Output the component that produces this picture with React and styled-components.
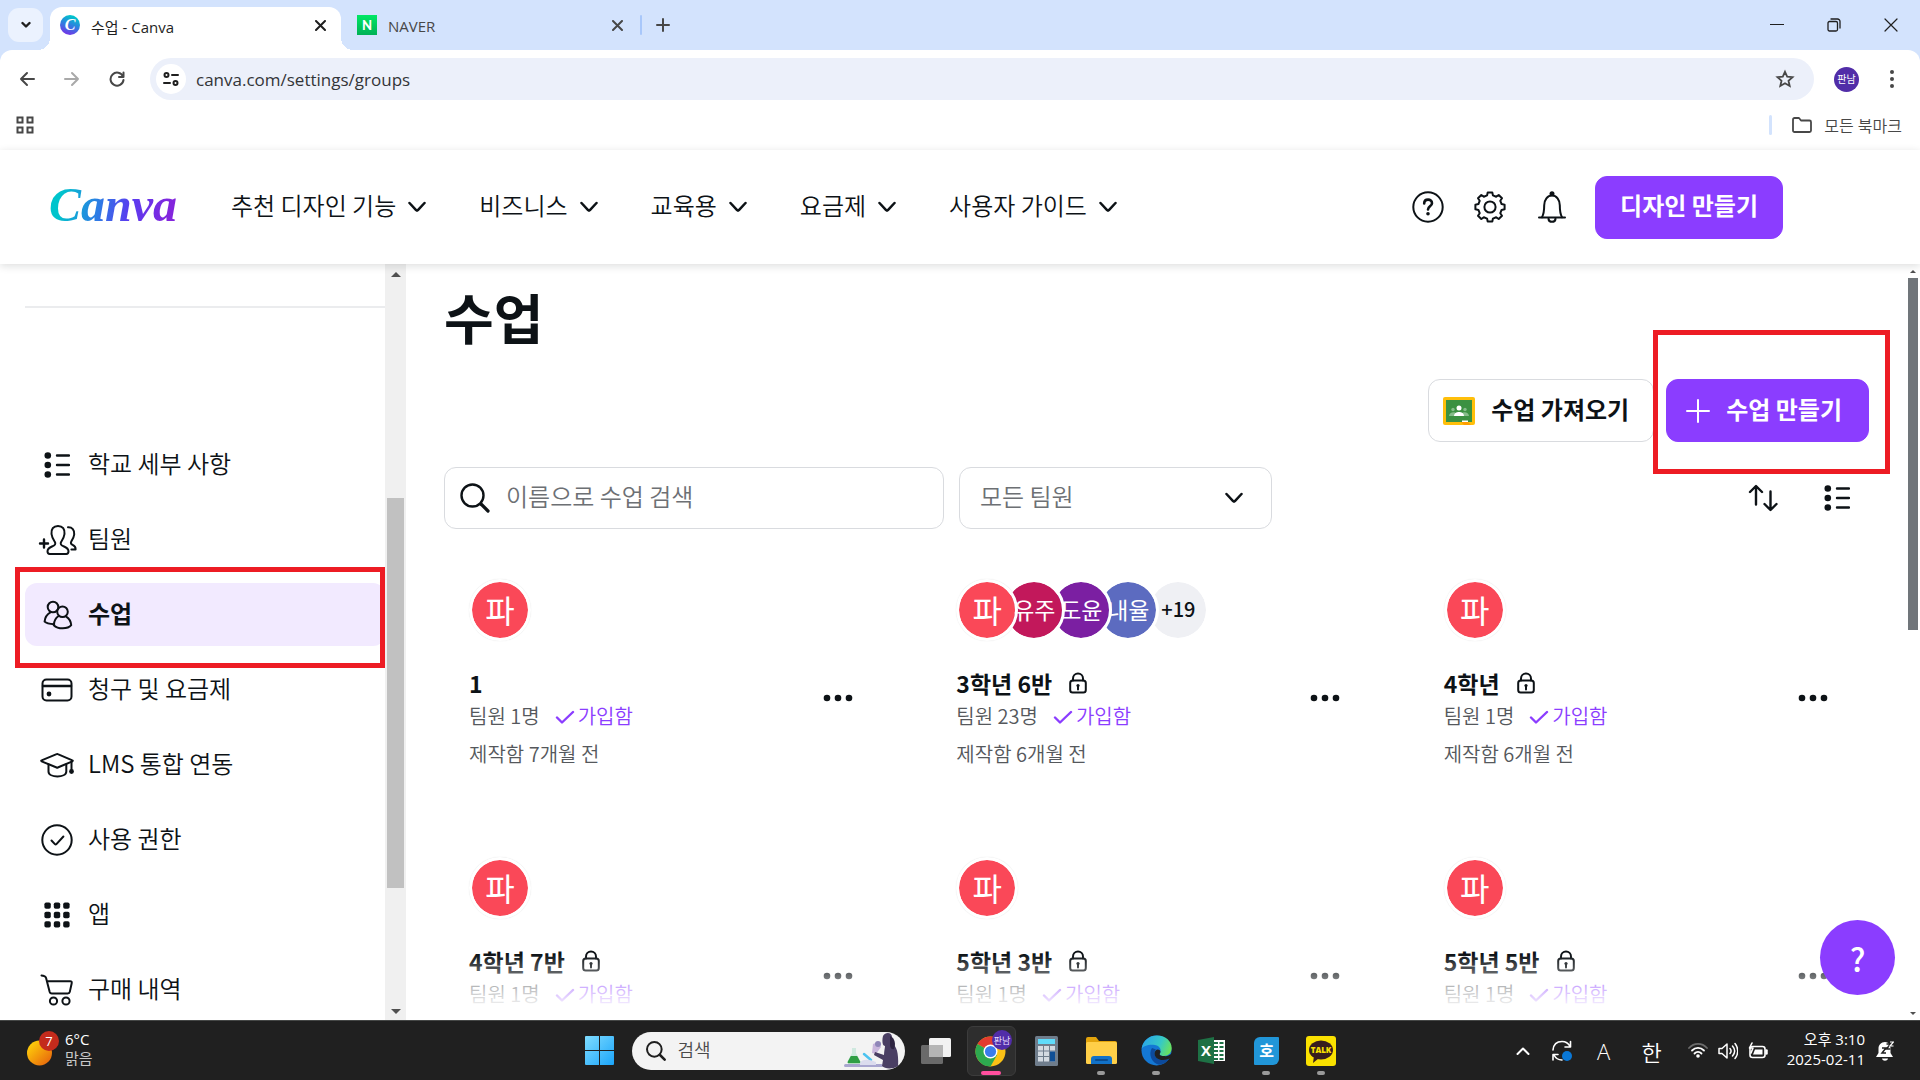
import React from "react";
import styled, { createGlobalStyle } from "styled-components";

const UI_FONT = `"Open Sans", "Noto Sans CJK KR", sans-serif`;
const PAGE_FONT = `"Noto Sans CJK KR", sans-serif`;
const INK = "#0d1216";
const PURPLE = "#8b3dff";
const RED = "#ed1c24";
// the Korean face sits low in its line box, controls lift it by this much
const LIFT = 5;

const GlobalStyle = createGlobalStyle`
    *, *::before, *::after {
        box-sizing: border-box;
    }
    body {
        margin: 0;
        background: #ffffff;
    }
    button, input, select {
        font: inherit;
        color: inherit;
        margin: 0;
        padding: 0;
        border: none;
        background: none;
        outline: none;
    }
    a {
        color: inherit;
        text-decoration: none;
    }
    ul {
        list-style: none;
        margin: 0;
        padding: 0;
    }
    svg {
        display: block;
        flex-shrink: 0;
    }
`;

const Screen = styled.div`
    height: 100vh;
    display: flex;
    flex-direction: column;
    overflow: hidden;
    background: #ffffff;
    color: ${INK};
    font-family: ${PAGE_FONT};
`;
const Label = styled.span`
    padding-bottom: ${LIFT}px;
`;

/* ---------- browser window ---------- */

const BrowserChrome = styled.header`
    flex-shrink: 0;
    background: #d3e3fd;
    font-family: ${UI_FONT};
    color: #474747;
`;
const TabStrip = styled.div`
    height: 50px;
    padding-left: 8px;
    display: flex;
    align-items: center;
`;
const TabSearchButton = styled.button`
    width: 35px;
    height: 34px;
    margin-right: 7px;
    border-radius: 11px;
    background: #ebf2fe;
    display: flex;
    align-items: center;
    justify-content: center;
    color: #1f1f1f;
`;
const Tab = styled.div`
    position: relative;
    align-self: flex-end;
    width: 291px;
    height: 43px;
    padding: 0 15px 7px 10px;
    display: flex;
    align-items: center;
    gap: 11px;
    border-radius: 12px 12px 0 0;
    background: ${(props) => (props.$active ? "#ffffff" : "transparent")};
    color: ${(props) => (props.$active ? "#1f1f1f" : "#474747")};
    font-size: 15px;

    & + & {
        margin-left: 6px;
    }

    &::before,
    &::after {
        content: "";
        display: ${(props) => (props.$active ? "block" : "none")};
        position: absolute;
        bottom: 0;
        width: 12px;
        height: 12px;
    }
    &::before {
        left: -12px;
        background: radial-gradient(circle at 0 0, transparent 12px, #ffffff 12px);
    }
    &::after {
        right: -12px;
        background: radial-gradient(circle at 100% 0, transparent 12px, #ffffff 12px);
    }
`;
const TabTitle = styled.span`
    flex-grow: 1;
    padding-top: 2px;
    white-space: nowrap;
`;
const PlainButton = styled.button`
    display: flex;
    align-items: center;
    justify-content: center;
    cursor: pointer;
`;
const CanvaFavicon = styled.span`
    width: 20px;
    height: 20px;
    border-radius: 50%;
    background: linear-gradient(200deg, #00c4cc 15%, #2f7fe0 50%, #7d2ae8 95%);
    color: #ffffff;
    font: italic bold 16px/20px "Liberation Serif", serif;
    text-align: center;
`;
const NaverFavicon = styled.span`
    width: 20px;
    height: 20px;
    background: linear-gradient(#00e865, #00b156);
    color: #ffffff;
    font: 900 13px/20px Lato, sans-serif;
    text-align: center;
`;
const TabDivider = styled.span`
    width: 2px;
    height: 20px;
    margin: 0 14px 0 2px;
    border-radius: 1px;
    background: #a8c7fa;
`;
const WindowControls = styled.div`
    margin-left: auto;
    padding-right: 22px;
    display: flex;
    align-items: center;
    gap: 43px;
    color: #1f1f1f;
`;
const Toolbar = styled.div`
    height: 58px;
    padding: 0 25px 0 19px;
    border-radius: 12px 12px 0 0;
    background: #ffffff;
    display: flex;
    align-items: center;
`;
const HistoryButtons = styled.div`
    display: flex;
    align-items: center;
    gap: 29px;
    margin-right: 25px;
`;
const AddressBar = styled.div`
    flex-grow: 1;
    height: 42px;
    padding: 0 19px 0 6px;
    border-radius: 21px;
    background: #ecf0fa;
    display: flex;
    align-items: center;
`;
const SiteInfoButton = styled(PlainButton)`
    width: 30px;
    height: 30px;
    border-radius: 50%;
    background: #ffffff;
    color: #1f1f1f;
`;
const AddressInput = styled.input`
    flex-grow: 1;
    margin: 0 10px;
    font-size: 17px;
    color: #333538;
`;
const ProfileButton = styled.button`
    width: 25px;
    height: 25px;
    margin: 0 30px 0 20px;
    border-radius: 50%;
    background: #512da8;
    color: #ffffff;
    font-size: 10px;
    line-height: 25px;
    text-align: center;
`;
const BookmarksBar = styled.div`
    height: 42px;
    padding: 0 18px 8px 16px;
    background: #ffffff;
    display: flex;
    align-items: center;
    justify-content: space-between;
`;
const AllBookmarks = styled.button`
    display: flex;
    align-items: center;
    gap: 12px;
    font-size: 16px;
    font-weight: 350;
`;
const BookmarkDivider = styled.span`
    width: 3px;
    height: 20px;
    margin-right: 8px;
    border-radius: 2px;
    background: #d3e3fd;
`;

/* ---------- Canva header ---------- */

const SiteHeader = styled.div`
    position: relative;
    z-index: 2;
    flex-shrink: 0;
    height: 114px;
    padding: 0 137px 0 47px;
    display: flex;
    align-items: center;
    background: #ffffff;
    box-shadow: 0 2px 8px rgba(13, 18, 22, 0.14);
`;
const Logo = styled.a`
    margin-right: 52px;
    padding: 0 2px ${LIFT}px;
    font: italic bold 48px/60px "Liberation Serif", serif;
    color: transparent;
    background: linear-gradient(100deg, #00c4cc 12%, #2d7be5 40%, #5a3cf0 62%, #8325dd 90%);
    background-clip: text;
    -webkit-background-clip: text;
`;
const MainNav = styled.nav`
    display: flex;
    gap: 53px;
`;
const NavButton = styled.button`
    display: flex;
    align-items: center;
    gap: 12px;
    font-size: 24px;
    font-weight: 350;
    line-height: 32px;
    white-space: nowrap;
    cursor: pointer;
`;
const HeaderActions = styled.div`
    margin-left: auto;
    display: flex;
    align-items: center;
    gap: 27px;
`;
const HeaderIcons = styled.div`
    display: flex;
    gap: 30px;
`;
const Button = styled.button`
    height: 63px;
    padding: 0 24px;
    border-radius: 12px;
    border: 1px solid ${(props) => (props.$primary ? PURPLE : "#d9dbdf")};
    background: ${(props) => (props.$primary ? PURPLE : "#ffffff")};
    color: ${(props) => (props.$primary ? "#ffffff" : INK)};
    display: flex;
    align-items: center;
    gap: 16px;
    font-size: 24px;
    font-weight: ${(props) => (props.$primary ? 700 : 600)};
    white-space: nowrap;
    cursor: pointer;
`;
const ActionButton = styled(Button)`
    padding: ${(props) => (props.$primary ? "0 26px 0 19px" : "0 24px 0 14px")};
`;

/* ---------- body: sidebar + classes ---------- */

const Body = styled.div`
    position: relative;
    flex-grow: 1;
    min-height: 0;
    display: flex;
`;
const Sidebar = styled.aside`
    width: 385px;
    flex-shrink: 0;
    padding-left: 25px;
    overflow: hidden;
`;
const SidebarRule = styled.hr`
    margin: 42px 0 125px;
    border: none;
    height: 2px;
    background: #ebecee;
`;
const SidebarList = styled.ul`
    display: flex;
    flex-direction: column;
    gap: 12px;
`;
const SidebarItem = styled.li`
    position: relative;
`;
const SidebarLink = styled.a`
    height: 63px;
    padding-left: 12px;
    display: flex;
    align-items: center;
    gap: 11px;
    border-radius: 12px;
    background: ${(props) => (props.$active ? "#f2eaff" : "transparent")};
    font-size: 24px;
    font-weight: ${(props) => (props.$active ? 700 : 350)};
`;
const SidebarIcon = styled.span`
    width: 40px;
    display: flex;
    justify-content: center;
`;
/* red annotation frames drawn over the page */
const SidebarFrame = styled.span`
    position: absolute;
    inset: -16px 0 -22px -10px;
    border: 5px solid ${RED};
    pointer-events: none;
`;
const ButtonFrame = styled.span`
    position: absolute;
    inset: -49px -21px -32px -13px;
    border: 5px solid ${RED};
    pointer-events: none;
`;
const SidebarScrollbar = styled.div`
    width: 21px;
    flex-shrink: 0;
    padding: 0 2px;
    display: grid;
    grid-template-rows: 21px 213fr 390fr 115fr 17px;
    justify-items: center;
    align-items: center;
    background: #f0f0f0;
`;
const SidebarThumb = styled.span`
    grid-row: 3;
    width: 100%;
    height: 100%;
    background: #c1c1c1;
`;
const PageScrollbar = styled.div`
    width: 12px;
    flex-shrink: 0;
    padding-right: 2px;
    display: grid;
    grid-template-rows: 14px 352fr 376fr 14px;
    justify-items: center;
    align-items: center;
`;
const PageThumb = styled.span`
    width: 100%;
    height: 100%;
    background: #70757a;
`;
const ScrollArrow = styled.span`
    grid-row: ${(props) => (props.$down ? -2 : 1)};
    width: 0;
    height: 0;
    border: ${(props) => props.$size}px solid transparent;
    border-top: ${(props) => (props.$down ? `${props.$size}px solid #505050` : "none")};
    border-bottom: ${(props) => (props.$down ? "none" : `${props.$size}px solid #505050`)};
`;
const Main = styled.main`
    position: relative;
    flex-grow: 1;
    min-width: 0;
    padding: 21px 39px 0 38px;
    overflow: hidden;
`;
const PageTitle = styled.h1`
    margin: 0 0 30px;
    font-size: 54px;
    line-height: 64px;
    font-weight: 700;
`;
const ActionRow = styled.div`
    display: flex;
    justify-content: flex-end;
    gap: 12px;
`;
const Framed = styled.div`
    position: relative;
`;
const FilterRow = styled.div`
    margin-top: 25px;
    display: flex;
    align-items: center;
    gap: 15px;
`;
const SearchField = styled.label`
    width: 500px;
    height: 62px;
    padding: 0 15px;
    display: flex;
    align-items: center;
    gap: 16px;
    border: 1px solid #d9dbdf;
    border-radius: 12px;
`;
const SearchInput = styled.input`
    flex-grow: 1;
    min-width: 0;
    padding-bottom: ${LIFT}px;
    font-size: 24px;
    font-weight: 350;

    &::placeholder {
        color: #6d7074;
        opacity: 1;
    }
`;
const SelectField = styled.label`
    position: relative;
    width: 313px;
    height: 62px;
    border: 1px solid #d9dbdf;
    border-radius: 12px;

    svg {
        position: absolute;
        right: 28px;
        top: 24px;
        pointer-events: none;
    }
`;
const Select = styled.select`
    width: 100%;
    height: 100%;
    padding: 0 20px ${LIFT}px;
    appearance: none;
    color: #6d7074;
    font-size: 24px;
    font-weight: 350;
`;
const ViewButtons = styled.div`
    margin-left: auto;
    padding-right: 19px;
    display: flex;
    gap: 46px;
`;
const ClassGrid = styled.ul`
    margin-top: 50px;
    display: grid;
    grid-template-columns: repeat(3, 1fr);
    gap: 87px 37px;
`;
const ClassCard = styled.li`
    padding: 0 25px;
`;
const AvatarStack = styled.div`
    display: flex;
    height: 62px;
`;
const Avatar = styled.span`
    position: relative;
    z-index: ${(props) => props.$level};
    width: 62px;
    height: 62px;
    margin-left: ${(props) => (props.$first ? 0 : -15)}px;
    padding-bottom: 2px;
    border: 3px solid #ffffff;
    border-radius: 50%;
    background: ${(props) => props.$color};
    background-clip: padding-box;
    box-shadow: ${(props) => (props.$first ? "0 0 1px rgba(13, 18, 22, 0.15)" : "none")};
    display: flex;
    align-items: center;
    justify-content: center;
    color: #ffffff;
    font-size: ${(props) => (props.$first ? 32 : 23)}px;
    line-height: 32px;
    white-space: nowrap;
`;
const MoreMembers = styled(Avatar)`
    margin-left: -12px;
    color: ${INK};
    font-size: 20px;
    font-weight: 500;
`;
const CardInfo = styled.div`
    margin-top: 26px;
    display: flex;
    justify-content: space-between;
    align-items: flex-start;
`;
const CardTitle = styled.h2`
    margin: 0;
    display: flex;
    align-items: center;
    gap: 17px;
    font-size: 23px;
    line-height: 32px;
    font-weight: 700;
`;
const CardMeta = styled.p`
    margin: 1px 0 0;
    display: flex;
    align-items: center;
    color: #55585c;
    font-size: 20px;
    line-height: 32px;
    font-weight: 350;
`;
const Joined = styled.span`
    margin-left: 15px;
    display: flex;
    align-items: center;
    gap: 3px;
    color: ${PURPLE};
`;
const CreatedLine = styled(CardMeta)`
    margin-top: 6px;
`;
const MoreButton = styled(PlainButton)`
    width: 63px;
    height: 62px;
`;
const BottomFade = styled.div`
    position: absolute;
    left: 0;
    right: 0;
    bottom: 0;
    height: 66px;
    z-index: 6;
    background: linear-gradient(rgba(255, 255, 255, 0), #ffffff 85%);
    pointer-events: none;
`;
const HelpBubble = styled.button`
    position: absolute;
    right: 25px;
    bottom: 25px;
    z-index: 7;
    width: 75px;
    height: 75px;
    border-radius: 50%;
    background: ${PURPLE};
    color: #ffffff;
    font-size: 32px;
    font-weight: 500;
`;

/* ---------- Windows taskbar ---------- */

const Taskbar = styled.footer`
    flex-shrink: 0;
    height: 60px;
    display: grid;
    grid-template-columns: 1fr auto 1fr;
    align-items: center;
    background: #202020;
    border-top: 1px solid #454746;
    color: #ffffff;
    font-family: ${UI_FONT};
    font-size: 15px;
`;
const Weather = styled.button`
    justify-self: start;
    margin-left: 27px;
    padding-bottom: 3px;
    display: flex;
    align-items: center;
    gap: 6px;
    text-align: left;
    line-height: 19px;
`;
const WeatherNote = styled.span`
    display: block;
    color: #c8c8c8;
`;
const AppRow = styled.div`
    display: flex;
    align-items: center;
    gap: 6px;
`;
const AppButton = styled.button`
    position: relative;
    width: 49px;
    height: 50px;
    border-radius: 6px;
    border: 1px solid ${(props) => (props.$active ? "#3c3c3c" : "transparent")};
    background: ${(props) => (props.$active ? "#2e2e2e" : "transparent")};
    display: flex;
    align-items: center;
    justify-content: center;

    &::after {
        content: "";
        display: ${(props) => (props.$running ? "block" : "none")};
        position: absolute;
        bottom: 0;
        width: ${(props) => (props.$active ? 20 : 8)}px;
        height: 4px;
        border-radius: 2px;
        background: ${(props) => (props.$active ? "#ff4f9f" : "#9a9a9a")};
    }
`;
const TaskSearch = styled.label`
    width: 273px;
    height: 38px;
    margin: 0 1px 0 2px;
    padding: 0 6px 0 14px;
    border-radius: 19px;
    background: #f3f3f3;
    display: flex;
    align-items: center;
    gap: 12px;
    overflow: hidden;
    color: #1f1f1f;
`;
const TaskSearchInput = styled.input`
    flex-grow: 1;
    min-width: 0;
    padding-bottom: 2px;
    font-size: 18px;
    font-weight: 350;

    &::placeholder {
        color: #4a4a4a;
        opacity: 1;
    }
`;
const Tray = styled.div`
    justify-self: end;
    padding-right: 26px;
    display: flex;
    align-items: center;
`;
const TrayIcons = styled.div`
    margin-left: 26px;
    display: flex;
    gap: 10px;
`;
const TrayButton = styled(PlainButton)`
    width: 20px;
    margin-left: ${(props) => props.$gap || 22}px;
    font-size: 22px;
    font-weight: 350;
`;
const Clock = styled.button`
    margin: 0 11px 0 19px;
    padding-bottom: 3px;
    text-align: right;
    line-height: 20px;
`;

/* ---------- icons ---------- */

const Line = ({ w = 24, h = w, box, stroke = 2, children, ...rest }) => (
    <svg
        width={w}
        height={h}
        viewBox={box || `0 0 ${w} ${h}`}
        fill="none"
        stroke="currentColor"
        strokeWidth={stroke}
        strokeLinecap="round"
        strokeLinejoin="round"
        aria-hidden="true"
        {...rest}
    >
        {children}
    </svg>
);

const Chevron = () => (
    <Line w={18} h={12} stroke={2.5}>
        <path d="M1.500 2l6.600 7.200c.6.600 1.200.6 1.800 0L16.500 2" />
    </Line>
);
const Cross = ({ size = 11, stroke = 2 }) => (
    <Line w={size} stroke={stroke}>
        <path d={`M1 1L${size - 1} ${size - 1}M${size - 1} 1L1 ${size - 1}`} />
    </Line>
);
const ListIcon = () => (
    <Line w={26} stroke={2.4}>
        <path d="M13 3.500h12M13 13h12M13 22.500h12" />
        <g fill="currentColor" stroke="none">
            <circle cx="3.800" cy="3.500" r="3.300" />
            <circle cx="3.800" cy="13" r="3.300" />
            <circle cx="3.800" cy="22.500" r="3.300" />
        </g>
    </Line>
);
const TeamIcon = () => (
    <Line w={40} h={32}>
        <path d="M3 19.500h8M7 15.500v8" strokeWidth="2.400" />
        <path d="M21 2c-4.700 0-7 3.200-6.500 8 .4 3.600 1.700 5.400 3.300 7.800 1.200 2 .2 3.400-2 4.300-3 1.200-5.300 2-5.300 5.200 0 2 .7 2.700 2.200 2.700h16.600c1.500 0 2.200-.7 2.200-2.700 0-3.200-2.300-4-5.300-5.200-2.200-.9-3.200-2.300-2-4.300 1.600-2.400 2.900-4.200 3.300-7.800.5-4.800-1.800-8-6.500-8z" />
        <path d="M31 3.300c4.200-.2 6.600 2.700 6.200 7.200-.3 3-1.700 5-2.900 6.900-.9 1.500-.4 2.700 1.300 3.500 2 .9 3.200 2 3 4.600h-4.200" />
    </Line>
);
const ClassesIcon = () => (
    <Line w={32}>
        <circle cx="12" cy="8" r="5.300" />
        <circle cx="21.500" cy="12.800" r="5.300" />
        <path d="M13.200 25.200c-4.200-.3-8-1-9.600-2.600.3-4 2.600-7.300 5.800-9.200" />
        <path d="M17.600 17c-2.700 1.700-4.600 5-4.800 9.200 4 4.200 14 4.200 17.400 0-.3-3.900-2.400-7-5-8.600" />
    </Line>
);
const CardIcon = () => (
    <Line w={32} h={24}>
        <rect x="1.500" y="1.500" width="29" height="21" rx="4" />
        <path d="M2 8h28" strokeWidth="2.500" />
        <circle cx="8" cy="16" r="2.400" fill="currentColor" stroke="none" />
    </Line>
);
const CapIcon = () => (
    <Line w={34} h={26}>
        <path d="M16.600 2.200L1.600 8.400c-.6.200-.6.700 0 .9l15 6.200c.4.200.8.200 1.200 0l14.600-6.200c.6-.2.6-.7 0-.9L17.800 2.200c-.4-.2-.8-.2-1.200 0z" />
        <path d="M8.500 12.500v7c0 6.600 17.800 6.600 17.800 0v-7M31.500 10v8" />
        <circle cx="31.500" cy="19.500" r="2.400" fill="currentColor" stroke="none" />
    </Line>
);
const CheckCircleIcon = () => (
    <Line w={32}>
        <circle cx="16" cy="16" r="14.700" />
        <path d="M10.500 16.500l3.400 3.600c.5.500 1 .5 1.500 0l7-7.600" />
    </Line>
);
const AppsIcon = () => (
    <svg width="26" height="26" viewBox="0 0 26 26" fill="currentColor" aria-hidden="true">
        {[0, 1, 2].map((row) =>
            [0, 1, 2].map((col) => (
                <rect key={`${row}${col}`} x={col * 9.4 + 0.4} y={row * 9.4 + 0.4} width="6.400" height="6.400" rx="1.800" />
            ))
        )}
    </svg>
);
const CartIcon = () => (
    <Line w={34} h={32}>
        <path d="M1.500 1.500l2.700.6c1 .3 1.500.8 1.800 1.700L9.700 18c.3 1 .9 1.500 2 1.500h16c1.200 0 1.900-.5 2.100-1.600l1.900-8.700c.3-1.400-.3-2-1.600-2H7" />
        <circle cx="13.500" cy="27" r="3.600" />
        <circle cx="26" cy="27" r="3.600" />
    </Line>
);
const HelpIcon = () => (
    <Line w={32}>
        <circle cx="16" cy="16" r="14.700" />
        <path d="M12.200 12.500c0-5.200 7.800-5 7.800-.3 0 3-4 3.200-4 6.200" strokeWidth="2.600" />
        <circle cx="16" cy="22.700" r="1.800" fill="currentColor" stroke="none" />
    </Line>
);

// eight rounded teeth around the hub
const gearPoints = Array.from({ length: 8 }, (_, tooth) =>
    [
        [-14, 12],
        [-9, 14.8],
        [9, 14.8],
        [14, 12],
    ].map(([shift, radius]) => {
        const angle = ((tooth * 45 + shift) * Math.PI) / 180;
        return `${(16 + radius * Math.sin(angle)).toFixed(1)},${(16 - radius * Math.cos(angle)).toFixed(1)}`;
    })
)
    .flat()
    .join(" ");
const GearIcon = () => (
    <Line w={32}>
        <polygon points={gearPoints} />
        <circle cx="16" cy="16" r="5.600" />
    </Line>
);
const BellIcon = () => (
    <Line w={32}>
        <path d="M6 26.300c2-3.600 2.200-7 2.200-12 0-5.600 3.300-9.800 7.800-9.800s7.800 4.200 7.800 9.800c0 5 .2 8.400 2.200 12" />
        <path d="M3 26.500h26M12.500 28c.5 3.800 6.500 3.800 7 0" />
        <circle cx="16" cy="2.800" r="2.500" fill="currentColor" stroke="none" />
    </Line>
);
const SearchIcon = ({ size = 30, stroke = 2.4 }) => (
    <Line w={size} box="0 0 30 30" stroke={stroke}>
        <circle cx="12.500" cy="12.500" r="11" />
        <path d="M21 21l7 7" strokeWidth={stroke + 0.8} />
    </Line>
);
const SortIcon = () => (
    <Line w={30} h={28} stroke={2.4}>
        <path d="M8 20.500V2.500M2 8l6-6 6 6M22.500 7.500v18M16.500 20l6 6 6-6" />
    </Line>
);
const LockIcon = () => (
    <Line w={18} h={22}>
        <rect x="1.200" y="8.500" width="15.600" height="12" rx="2.500" />
        <path d="M4 8.500V6.500a5 5 0 0 1 10 0v2M9 14.500v3" />
        <circle cx="9" cy="13.500" r="1.600" fill="currentColor" stroke="none" />
    </Line>
);
const CheckIcon = () => (
    <Line w={20} h={16} stroke={2.4}>
        <path d="M2 9.500l5 5L18 4" />
    </Line>
);
const DotsIcon = () => (
    <svg width="30" height="8" viewBox="0 0 30 8" fill="currentColor" aria-hidden="true">
        <circle cx="4" cy="4" r="3.300" />
        <circle cx="15" cy="4" r="3.300" />
        <circle cx="26" cy="4" r="3.300" />
    </svg>
);
const PlusIcon = () => (
    <Line w={24}>
        <path d="M12 1v22M1 12h22" />
    </Line>
);
const ClassroomIcon = () => (
    <svg width="32" height="28" viewBox="0 0 32 28" aria-hidden="true">
        <rect width="32" height="28" rx="2" fill="#ffbf0a" />
        <rect x="3" y="3" width="26" height="22" fill="#3b9141" />
        <path d="M18 25h7l3 3h-7z" fill="#ff9e00" />
        <rect x="19" y="23.500" width="6" height="1.500" fill="#ffffff" />
        <g fill="#86bd8a">
            <circle cx="10" cy="12.500" r="1.700" />
            <circle cx="22" cy="12.500" r="1.700" />
            <path d="M6 19c0-4 6-5 8-2v2zM18 19v-2c2-3 8-2 8 2z" />
        </g>
        <circle cx="16" cy="11" r="2.500" fill="#ffffff" />
        <path d="M11 19c0-5.500 10-5.500 10 0z" fill="#ffffff" />
    </svg>
);

const WeatherIcon = () => (
    <svg width="32" height="36" viewBox="0 0 32 36" aria-hidden="true">
        <defs>
            <linearGradient id="sun" x1="0" y1="0" x2="1" y2="1">
                <stop offset="0.1" stopColor="#ffd10a" />
                <stop offset="0.9" stopColor="#e8680c" />
            </linearGradient>
        </defs>
        <circle cx="12.500" cy="22" r="12.500" fill="url(#sun)" />
        <circle cx="22" cy="10" r="10" fill="#c42b1c" />
        <text x="22" y="15" fontSize="13" textAnchor="middle" fill="#ffffff">
            7
        </text>
    </svg>
);
const StartIcon = () => (
    <svg width="29" height="29" viewBox="0 0 29 29" aria-hidden="true">
        <defs>
            <linearGradient id="win" x1="0" y1="0" x2="1" y2="1">
                <stop offset="0" stopColor="#7fdcff" />
                <stop offset="1" stopColor="#1ba5fa" />
            </linearGradient>
        </defs>
        <path d="M0 1a1 1 0 0 1 1-1h13v14H0zM15 0h13a1 1 0 0 1 1 1v13H15zM0 15h14v14H1a1 1 0 0 1-1-1zM15 15h14v13a1 1 0 0 1-1 1H15z" fill="url(#win)" />
    </svg>
);
const LabPicture = () => (
    <svg width="55" height="36" viewBox="0 0 55 36" aria-hidden="true">
        <rect x="0" y="31" width="39" height="3" rx="1.500" fill="#a9a6cf" />
        <path d="M8 15h4v5l4.500 8.500c.6 1.200 0 2-1.200 2H4.700c-1.200 0-1.800-.8-1.200-2L8 20z" fill="#cfe9df" />
        <path d="M6.800 23h6.400l3 5.500c.5 1 0 1.800-1 1.800H4.800c-1 0-1.500-.8-1-1.800z" fill="#2f9e44" />
        <path d="M20 21l7 6" stroke="#4cc3f0" strokeWidth="2.500" strokeLinecap="round" />
        <path d="M16 30c2-4 8-4 16-1v3H16z" fill="#dcdcee" />
        <path d="M29 11l5-2 3 5-5 7-4-1z" fill="#c9b6dc" />
        <circle cx="34" cy="11" r="3" fill="#8f86b8" />
        <path d="M39 3c2-4 9-4 9 1 1 2 0 4-1 6 5 2 8 8 7 24-7 2-13 2-16-1l1-6-9-5 1-3 9 3c0-4 1-7 1-9-3 0-3-6-2-10z" fill="#4a3f63" />
        <path d="M46 3c5 2 6 8 4 13-3 1-4-2-4-5z" fill="#2d2440" />
    </svg>
);
const TaskViewIcon = () => (
    <svg width="30" height="28" viewBox="0 0 30 28" aria-hidden="true">
        <rect x="0" y="8" width="22" height="19" rx="1.500" fill="#6a6a6a" />
        <rect x="8" y="1" width="22" height="19" rx="1.500" fill="#f2f2f2" />
        <rect x="8" y="8" width="14" height="12" fill="#b5b5b5" />
    </svg>
);
const ChromeIcon = () => (
    <svg width="38" height="38" viewBox="-2.500 3.500 38 38" overflow="visible" aria-hidden="true">
        <circle cx="16" cy="23" r="15" fill="#fbc116" />
        <path d="M16 23L3 15.500A15 15 0 0 1 29 15.500z" fill="#e33b2e" />
        <path d="M3 15.500A15 15 0 0 0 16 38l6.500-11.500L16 23z" fill="#2da94f" />
        <circle cx="16" cy="23" r="7" fill="#ffffff" />
        <circle cx="16" cy="23" r="5.600" fill="#3a7cec" />
        <circle cx="27.500" cy="11.500" r="10" fill="#512da8" />
        <text x="27.500" y="15" fontSize="9" textAnchor="middle" fill="#e6ddff">
            판남
        </text>
    </svg>
);
const CalculatorIcon = () => (
    <svg width="23" height="30" viewBox="0 0 23 30" aria-hidden="true">
        <rect width="23" height="30" rx="1.500" fill="#6f7d8c" />
        <rect x="3" y="3" width="17" height="5" fill="#5fdcfb" />
        {[10, 15.5, 21].map((y) =>
            [3, 9, 15].map((x) => (
                <rect key={`${x}-${y}`} x={x} y={y} width="5" height="4.500" fill="#d3dae1" />
            ))
        )}
        <rect x="15" y="15.500" width="5" height="10" fill="#0f4f96" />
    </svg>
);
const ExplorerIcon = () => (
    <svg width="31" height="28" viewBox="0 0 31 28" aria-hidden="true">
        <path d="M0 2a2 2 0 0 1 2-2h8l3 4h16a2 2 0 0 1 2 2v6H0z" fill="#e3a40c" />
        <rect x="0" y="5" width="31" height="22" rx="1.500" fill="#ffcf48" />
        <path d="M5 27v-5a3 3 0 0 1 3-3h15a3 3 0 0 1 3 3v5z" fill="#1272c8" />
        <rect x="9" y="22" width="13" height="2" rx="1" fill="#0b4d91" />
    </svg>
);
const EdgeIcon = () => (
    <svg width="31" height="31" viewBox="0 0 31 31" aria-hidden="true">
        <defs>
            <linearGradient id="edgeTop" x1="0" y1="0.300" x2="1" y2="0.600">
                <stop offset="0" stopColor="#2aa4e8" />
                <stop offset="0.600" stopColor="#36c9c6" />
                <stop offset="1" stopColor="#6be35a" />
            </linearGradient>
        </defs>
        <circle cx="15.500" cy="15.500" r="15" fill="#1478d4" />
        <path d="M.6 14C2 5 8.500.5 16 .5c9 0 14.700 6 14.700 12.500 0 5-3.700 8-8 8-3.200 0-4.700-1.200-3.700-2.800 1.600-2.400.6-7.200-5-8.200C8 9 2 11 .6 14z" fill="url(#edgeTop)" />
        <path d="M11 13c-4 6-.5 15 7 16.800 5-.4 8-3 10-6-6 2.700-14.500 1-14.500-5.300 0-2 .6-3 1.500-4z" fill="#0c4a9c" />
        <path d="M13.500 18.500c0 6.300 8.500 8 14.500 5.300l3-2.800v-3c-2 2.500-5 3.500-8.300 3-3.200 0-4.700-1.200-3.700-2.800.6-1 .6-2-.2-3-2.300-2-5.300 0-5.300 3.300z" fill="#202020" />
    </svg>
);
const ExcelIcon = () => (
    <svg width="27" height="27" viewBox="0 0 27 27" aria-hidden="true">
        <rect x="13" y="3" width="14" height="21" fill="#ffffff" />
        <path d="M16 6h4M16 10h4M16 14h4M16 18h4M16 22h4M21.500 6h4M21.500 10h4M21.500 14h4M21.500 18h4M21.500 22h4" stroke="#1e7145" strokeWidth="2" />
        <path d="M0 3l16-3v27L0 24z" fill="#1e7145" />
        <text x="8" y="19" fontSize="15" fontWeight="700" textAnchor="middle" fill="#ffffff">
            X
        </text>
    </svg>
);
const HangulIcon = () => (
    <svg width="25" height="28" viewBox="0 0 25 28" aria-hidden="true">
        <path d="M6 0h18a1 1 0 0 1 1 1v21a6 6 0 0 1-6 6H1a1 1 0 0 1-1-1V6a6 6 0 0 1 6-6z" fill="#2196d8" />
        <text x="12.500" y="20" fontSize="16" fontWeight="700" textAnchor="middle" fill="#ffffff">
            호
        </text>
    </svg>
);
const TalkIcon = () => (
    <svg width="30" height="30" viewBox="0 0 30 30" aria-hidden="true">
        <rect width="30" height="30" rx="3" fill="#fae100" />
        <ellipse cx="15" cy="14" rx="12" ry="9.500" fill="#371d1e" />
        <path d="M8 20l-1 7 6-5z" fill="#371d1e" />
        <text x="15" y="17" fontSize="8" fontWeight="800" textAnchor="middle" fill="#fae100">
            TALK
        </text>
    </svg>
);

/* ---------- data ---------- */

const NAV = ["추천 디자인 기능", "비즈니스", "교육용", "요금제", "사용자 가이드"];

const SIDEBAR = [
    { label: "학교 세부 사항", Icon: ListIcon },
    { label: "팀원", Icon: TeamIcon },
    { label: "수업", Icon: ClassesIcon, active: true },
    { label: "청구 및 요금제", Icon: CardIcon },
    { label: "LMS 통합 연동", Icon: CapIcon },
    { label: "사용 권한", Icon: CheckCircleIcon },
    { label: "앱", Icon: AppsIcon },
    { label: "구매 내역", Icon: CartIcon },
];

const OWNER = { name: "파", color: "#fa4858" };
const CLASSES = [
    { title: "1", members: 1, created: "7개월 전", people: [OWNER] },
    {
        title: "3학년 6반",
        members: 23,
        created: "6개월 전",
        locked: true,
        people: [
            OWNER,
            { name: "유주", color: "#c2185b" },
            { name: "도윤", color: "#7b1fa2" },
            { name: "내율", color: "#5c6bc0" },
        ],
        more: 19,
    },
    { title: "4학년", members: 1, created: "6개월 전", locked: true, people: [OWNER] },
    { title: "4학년 7반", members: 1, locked: true, people: [OWNER] },
    { title: "5학년 3반", members: 1, locked: true, people: [OWNER] },
    { title: "5학년 5반", members: 1, locked: true, people: [OWNER] },
];

const TASKBAR_APPS = [
    { name: "작업 보기", Icon: TaskViewIcon },
    { name: "Chrome", Icon: ChromeIcon, active: true, running: true },
    { name: "계산기", Icon: CalculatorIcon },
    { name: "파일 탐색기", Icon: ExplorerIcon, running: true },
    { name: "Edge", Icon: EdgeIcon, running: true },
    { name: "Excel", Icon: ExcelIcon },
    { name: "한글", Icon: HangulIcon, running: true },
    { name: "카카오톡", Icon: TalkIcon, running: true },
];

/* ---------- parts ---------- */

const Browser = () => (
    <BrowserChrome>
        <TabStrip>
            <TabSearchButton aria-label="탭 검색">
                <Line w={10} h={8} stroke={2.4}>
                    <path d="M1.500 2L5 5.500 8.500 2" />
                </Line>
            </TabSearchButton>
            <Tab $active>
                <CanvaFavicon>C</CanvaFavicon>
                <TabTitle>수업 - Canva</TabTitle>
                <PlainButton aria-label="탭 닫기">
                    <Cross />
                </PlainButton>
            </Tab>
            <Tab>
                <NaverFavicon>N</NaverFavicon>
                <TabTitle>NAVER</TabTitle>
                <PlainButton aria-label="탭 닫기">
                    <Cross />
                </PlainButton>
            </Tab>
            <TabDivider />
            <PlainButton aria-label="새 탭">
                <Line w={14}>
                    <path d="M7 1v12M1 7h12" />
                </Line>
            </PlainButton>
            <WindowControls>
                <PlainButton aria-label="최소화">
                    <Line w={14} stroke={1}>
                        <path d="M0 6.500h14" />
                    </Line>
                </PlainButton>
                <PlainButton aria-label="이전 크기로">
                    <Line w={14} stroke={1.3}>
                        <rect x="1" y="3.500" width="9.500" height="9.500" rx="1.500" />
                        <path d="M4 1h6.500A2.500 2.500 0 0 1 13 3.500V10" />
                    </Line>
                </PlainButton>
                <PlainButton aria-label="닫기">
                    <Cross size={14} stroke={1.2} />
                </PlainButton>
            </WindowControls>
        </TabStrip>
        <Toolbar>
            <HistoryButtons>
                <PlainButton aria-label="뒤로">
                    <Line w={16}>
                        <path d="M15 8H2M8 2L2 8l6 6" />
                    </Line>
                </PlainButton>
                <PlainButton aria-label="앞으로">
                    <Line w={16} color="#a9a9a9">
                        <path d="M1 8h13M8 2l6 6-6 6" />
                    </Line>
                </PlainButton>
                <PlainButton aria-label="새로고침">
                    <Line w={16}>
                        <path d="M14 5.500A6.500 6.500 0 1 0 14.500 9M14.500 1.500v4.500H10" />
                    </Line>
                </PlainButton>
            </HistoryButtons>
            <AddressBar>
                <SiteInfoButton aria-label="사이트 정보">
                    <Line w={16} h={14}>
                        <circle cx="3.500" cy="3" r="2" />
                        <path d="M9 3h6M1 11h6" />
                        <circle cx="12.500" cy="11" r="2" />
                    </Line>
                </SiteInfoButton>
                <AddressInput aria-label="주소창" defaultValue="canva.com/settings/groups" />
                <PlainButton aria-label="북마크">
                    <Line w={20} stroke={1.8} strokeLinejoin="miter">
                        <path d="M10 2.800l2.200 4.900 5.300.5-4 3.500 1.200 5.300-4.700-2.800L5.300 17l1.200-5.300-4-3.500 5.300-.5z" />
                    </Line>
                </PlainButton>
            </AddressBar>
            <ProfileButton>판남</ProfileButton>
            <PlainButton aria-label="메뉴">
                <svg width="6" height="20" viewBox="0 0 6 20" fill="currentColor">
                    <circle cx="3" cy="3" r="2" />
                    <circle cx="3" cy="10" r="2" />
                    <circle cx="3" cy="17" r="2" />
                </svg>
            </PlainButton>
        </Toolbar>
        <BookmarksBar>
            <PlainButton aria-label="앱">
                <Line w={18} strokeLinejoin="miter">
                    <path d="M1.500 1.500h5v5h-5zM11.500 1.500h5v5h-5zM1.500 11.500h5v5h-5zM11.500 11.500h5v5h-5z" />
                </Line>
            </PlainButton>
            <AllBookmarks>
                <BookmarkDivider />
                <Line w={20} h={16} stroke={1.8}>
                    <path d="M1 13.500v-11A1.500 1.500 0 0 1 2.500 1H7l2 2.500h8.500A1.500 1.500 0 0 1 19 5v8.500a1.500 1.500 0 0 1-1.500 1.500h-15A1.500 1.500 0 0 1 1 13.500z" />
                </Line>
                모든 북마크
            </AllBookmarks>
        </BookmarksBar>
    </BrowserChrome>
);

const CanvaHeader = () => (
    <SiteHeader>
        <Logo href="#home">Canva</Logo>
        <MainNav>
            {NAV.map((label) => (
                <NavButton key={label}>
                    <Label>{label}</Label>
                    <Chevron />
                </NavButton>
            ))}
        </MainNav>
        <HeaderActions>
            <HeaderIcons>
                <PlainButton aria-label="도움말">
                    <HelpIcon />
                </PlainButton>
                <PlainButton aria-label="설정">
                    <GearIcon />
                </PlainButton>
                <PlainButton aria-label="알림">
                    <BellIcon />
                </PlainButton>
            </HeaderIcons>
            <Button $primary>
                <Label>디자인 만들기</Label>
            </Button>
        </HeaderActions>
    </SiteHeader>
);

const ClassItem = ({ item }) => (
    <ClassCard>
        <AvatarStack>
            {item.people.map((person, index) => (
                <Avatar key={person.name} $color={person.color} $first={index === 0} $level={5 - index}>
                    {person.name}
                </Avatar>
            ))}
            {item.more && (
                <MoreMembers $color="#eff0f4" $level={1}>
                    +{item.more}
                </MoreMembers>
            )}
        </AvatarStack>
        <CardInfo>
            <div>
                <CardTitle>
                    {item.title}
                    {item.locked && <LockIcon />}
                </CardTitle>
                <CardMeta>
                    팀원 {item.members}명
                    <Joined>
                        <CheckIcon />
                        가입함
                    </Joined>
                </CardMeta>
                {item.created && <CreatedLine>제작함 {item.created}</CreatedLine>}
            </div>
            <MoreButton aria-label="더 보기">
                <DotsIcon />
            </MoreButton>
        </CardInfo>
    </ClassCard>
);

const WindowsTaskbar = () => (
    <Taskbar>
        <Weather>
            <WeatherIcon />
            <span>
                6°C
                <WeatherNote>맑음</WeatherNote>
            </span>
        </Weather>
        <AppRow>
            <AppButton aria-label="시작">
                <StartIcon />
            </AppButton>
            <TaskSearch>
                <SearchIcon size={20} stroke={3} />
                <TaskSearchInput placeholder="검색" />
                <LabPicture />
            </TaskSearch>
            {TASKBAR_APPS.map(({ name, Icon, active, running }) => (
                <AppButton key={name} aria-label={name} $active={active} $running={running}>
                    <Icon />
                </AppButton>
            ))}
        </AppRow>
        <Tray>
            <PlainButton aria-label="숨겨진 아이콘">
                <Line w={14} h={10}>
                    <path d="M1.500 8L7 2.500 12.500 8" />
                </Line>
            </PlainButton>
            <TrayButton aria-label="동기화">
                <Line w={20} h={22} stroke={1.6}>
                    <path d="M1 10C1.500 4.500 5 1.500 10 1.500c4 0 6.500 2 8 5M18.500 1.500V7H13M1 20v-5.500h5M2 15c1.500 3 4 5 8 5" />
                    <circle cx="15" cy="16" r="5" fill="#0a78d7" stroke="none" />
                </Line>
            </TrayButton>
            <TrayButton>A</TrayButton>
            <TrayButton $gap={28}>한</TrayButton>
            <TrayIcons>
                <Line w={20} h={16} stroke={1.8}>
                    <path d="M1 6C6 .5 14 .5 19 6" stroke="#6c6c6c" />
                    <path d="M4 8.500c3.500-3.500 8.500-3.500 12 0M6.500 11.500c2-2 5-2 7 0" />
                    <circle cx="10" cy="14" r="1.800" fill="currentColor" stroke="none" />
                </Line>
                <Line w={20} h={18} stroke={1.5}>
                    <path d="M1 6.500h3L9 2v14l-5-4.500H1zM12 6.500c1.300 1.500 1.300 3.500 0 5M14.500 4c2.600 3 2.600 7 0 10M17 1.500c3.700 4.500 3.700 10.500 0 15" />
                </Line>
                <Line w={20} h={18} stroke={1.6}>
                    <rect x="2" y="4.500" width="15" height="11" rx="2.500" />
                    <path d="M7 7.500h7.500v5H5z" fill="currentColor" stroke="none" />
                    <path d="M18.500 8.500v3" strokeWidth="2.500" />
                    <path d="M4 1L1.500 6H5l-2 5" />
                </Line>
            </TrayIcons>
            <Clock>
                오후 3:10
                <br />
                2025-02-11
            </Clock>
            <PlainButton aria-label="알림">
                <svg width="18" height="20" viewBox="0 0 18 20" aria-hidden="true">
                    <path d="M9 1C5 1 2.500 4 2.500 7.500V12L0 16h17l-2.500-4V7.500C14.500 4 12.500 1 9 1zM6 17.500c.5 3 5.500 3 6 0z" fill="#ffffff" />
                    <path d="M6 7h4l-4 5h4" fill="none" stroke="#202020" strokeWidth="1.500" />
                    <path d="M10.500 3h4l-4 5h4" fill="none" stroke="#202020" strokeWidth="1.500" />
                    <path d="M14 1h3.500L14 5h3.500" fill="none" stroke="#ffffff" strokeWidth="1.200" />
                </svg>
            </PlainButton>
        </Tray>
    </Taskbar>
);

const App = () => (
    <Screen>
        <GlobalStyle />
        <Browser />
        <CanvaHeader />
        <Body>
            <Sidebar>
                <SidebarRule />
                <SidebarList>
                    {SIDEBAR.map(({ label, Icon, active }) => (
                        <SidebarItem key={label}>
                            <SidebarLink href="#settings" $active={active}>
                                <SidebarIcon>
                                    <Icon />
                                </SidebarIcon>
                                <Label>{label}</Label>
                            </SidebarLink>
                            {active && <SidebarFrame />}
                        </SidebarItem>
                    ))}
                </SidebarList>
            </Sidebar>
            <SidebarScrollbar>
                <ScrollArrow $size={5} />
                <SidebarThumb />
                <ScrollArrow $down $size={5} />
            </SidebarScrollbar>
            <Main>
                <PageTitle>수업</PageTitle>
                <ActionRow>
                    <ActionButton>
                        <ClassroomIcon />
                        <Label>수업 가져오기</Label>
                    </ActionButton>
                    <Framed>
                        <ActionButton $primary>
                            <PlusIcon />
                            <Label>수업 만들기</Label>
                        </ActionButton>
                        <ButtonFrame />
                    </Framed>
                </ActionRow>
                <FilterRow>
                    <SearchField>
                        <SearchIcon />
                        <SearchInput placeholder="이름으로 수업 검색" />
                    </SearchField>
                    <SelectField>
                        <Select aria-label="팀원 필터">
                            <option>모든 팀원</option>
                        </Select>
                        <Chevron />
                    </SelectField>
                    <ViewButtons>
                        <PlainButton aria-label="정렬">
                            <SortIcon />
                        </PlainButton>
                        <PlainButton aria-label="목록 보기">
                            <ListIcon />
                        </PlainButton>
                    </ViewButtons>
                </FilterRow>
                <ClassGrid>
                    {CLASSES.map((item) => (
                        <ClassItem key={item.title} item={item} />
                    ))}
                </ClassGrid>
                <BottomFade />
            </Main>
            <PageScrollbar>
                <ScrollArrow $size={3} />
                <PageThumb />
                <ScrollArrow $down $size={3} />
            </PageScrollbar>
            <HelpBubble>?</HelpBubble>
        </Body>
        <WindowsTaskbar />
    </Screen>
);

export default App;
